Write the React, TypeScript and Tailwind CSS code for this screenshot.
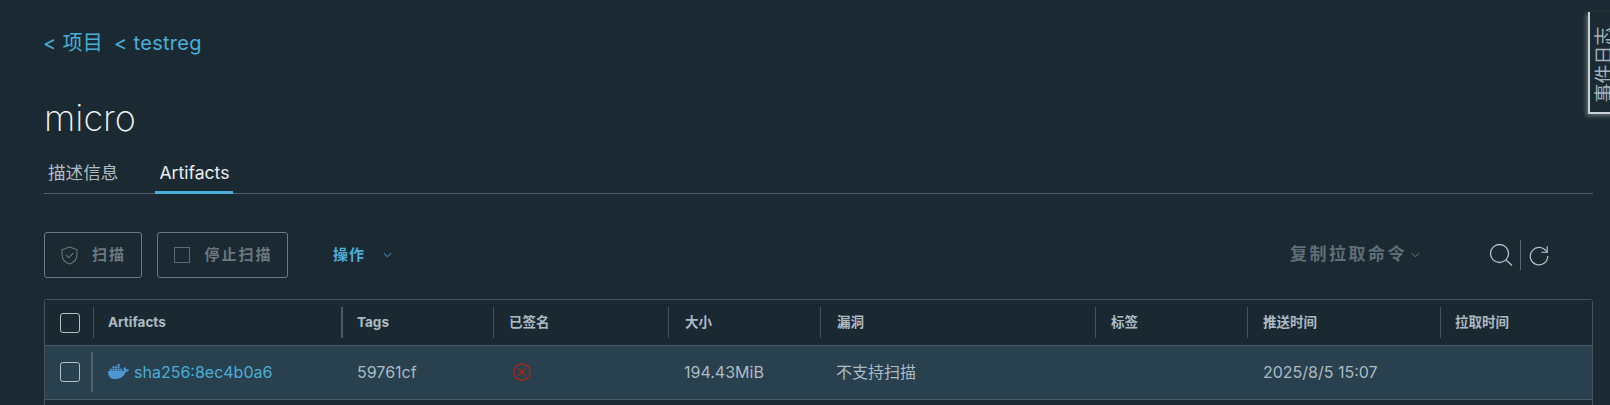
import React from "react";
import { SiDocker } from "react-icons/si";

const font = "font-['Inter','Noto_Sans_CJK_SC',sans-serif]";
const cols = "grid grid-cols-[48px_248px_152px_175px_152px_275px_152px_193px_1fr]";
const headers = [
  { t: "Artifacts", c: "pl-[14px] border-l border-[#45555f]" },
  { t: "Tags", c: "pl-[14px] border-l-2 border-[#4a5a66]" },
  { t: "已签名", c: "pl-[15px] border-l border-[#45555f]" },
  { t: "大小", c: "pl-[16px] border-l border-[#45555f]" },
  { t: "漏洞", c: "pl-[16px] border-l border-[#45555f]" },
  { t: "标签", c: "pl-[15px] border-l border-[#45555f]" },
  { t: "推送时间", c: "pl-[15px] border-l border-[#45555f]" },
  { t: "拉取时间", c: "pl-[14px] border-l border-[#45555f]" },
];

function Check() {
  return <div className="h-5 w-5 rounded-[3px] border border-[#b3bfc7]" />;
}

function Chevron({ className }: { className: string }) {
  return (
    <svg viewBox="0 0 10 6" className={className} fill="none" stroke="currentColor" strokeWidth="1.1">
      <path d="M1 1l4 4 4-4" />
    </svg>
  );
}

export default function App() {
  return (
    <div className={`relative h-[405px] w-[1610px] overflow-hidden bg-[#1b2a32] ${font}`}>
      <div className="flex flex-col pl-11 pr-[17px] pt-[29px]">
        <div className="-ml-px flex h-[28px] items-center gap-[11px] text-[20px] tracking-[0.3px] text-[#49afd9]">
          <span>&lt; 项目</span>
          <span>&lt; testreg</span>
        </div>
        <h1 className="mt-[38px] h-[46px] text-[36px] font-extralight leading-[46px] text-[#f2f4f5]">micro</h1>
        <div className="mt-[16px] flex h-[37px] items-stretch gap-[41px] border-b border-[#4f5f6b] pl-1 text-[17.600px] leading-[32px]">
          <span className="text-[#adbbc4]">描述信息</span>
          <span className="-mb-px -ml-1 border-b-[3px] border-[#49afd9] px-1 text-[#eaedf0]">Artifacts</span>
        </div>

        <div className="mt-[38px] flex h-[46px] items-center">
          <button className="flex h-[46px] w-[98px] items-center justify-center gap-[14px] rounded-[3px] border border-[#6b7a84] pl-[1px] text-[15px] font-bold tracking-[2px] text-[#6b7880]">
            <svg viewBox="0 0 16 18" className="h-[19px] w-[17px]" fill="none" stroke="#6b7880" strokeWidth="1">
              <path d="M8 1l7 2.400v5.400c0 4-3 6.800-7 8.200-4-1.400-7-4.200-7-8.200V3.400z" />
              <path d="M4.500 8.500l2.700 2.700 4.300-4.500" />
            </svg>
            <span>扫描</span>
          </button>
          <button className="ml-[15px] flex h-[46px] w-[131px] items-center justify-center gap-[14px] rounded-[3px] border border-[#6b7a84] pl-[2px] text-[15px] font-bold tracking-[2px] text-[#6b7880]">
            <span className="h-[16px] w-[16px] border border-[#5d6a73]" />
            <span>停止扫描</span>
          </button>
          <span className="ml-[45px] text-[15px] font-bold tracking-[1px] text-[#49afd9]">操作</span>
          <Chevron className="ml-[18px] h-[6px] w-[9px] text-[#49afd9]" />
          <div className="ml-auto flex items-center">
            <span className="text-[17px] font-bold tracking-[2.500px] text-[#5f6e77]">复制拉取命令</span>
            <Chevron className="ml-[4px] h-[6px] w-[9px] text-[#6b7880]" />
            <svg viewBox="0 0 24 24" className="ml-[69px] h-[24px] w-[24px]" fill="none" stroke="#b3c2cb" strokeWidth="1.300">
              <circle cx="10.500" cy="10.500" r="9" />
              <path d="M17 17l6 5.500" />
            </svg>
            <span className="ml-[7px] h-[30px] w-px bg-[#56687a]" />
            <svg viewBox="0 0 24 24" className="ml-[7px] mr-[43px] h-[22px] w-[22px]" fill="none" stroke="#b3c2cb" strokeWidth="1.300">
              <path d="M20.500 9A9.500 9.500 0 1 0 21.500 13" />
              <path d="M21 2.500V9h-6.500" />
            </svg>
          </div>
        </div>

        <div className="mt-[21px] rounded-t-[3px] border border-[#45555f]">
          <div className={`${cols} h-[45px] items-center bg-[#1a2832] text-[13.500px] font-bold text-[#acbac3]`}>
            <div className="flex h-[31px] items-center pl-[15px]"><Check /></div>
            {headers.map((h) => (
              <div key={h.t} className={`flex h-[31px] items-center ${h.c}`}>{h.t}</div>
            ))}
          </div>
          <div className={`${cols} h-[55px] items-center border-y border-[#4a5a66] bg-[#29404e] pb-[2px] text-[16px] text-[#adbbc4]`}>
            <div className="flex h-[40px] items-center justify-between pl-[15px]">
              <Check />
              <span className="h-full w-[2px] bg-[#4f626f]" />
            </div>
            <div className="flex items-center gap-[5px] pl-[15px] text-[#49afd9]">
              <SiDocker className="h-[21px] w-[21px] text-[#4d97d1]" />
              <span>sha256:8ec4b0a6</span>
            </div>
            <div className="pl-[16px]">59761cf</div>
            <div className="pl-[20px]">
              <svg viewBox="0 0 18 18" className="h-[18px] w-[18px]" fill="none" stroke="#b5230f" strokeWidth="1.200">
                <circle cx="9" cy="9" r="8.200" />
                <path d="M5.500 5.500l7 7M12.500 5.500l-7 7" />
              </svg>
            </div>
            <div className="pl-[16px]">194.43MiB</div>
            <div className="pl-[16px]">不支持扫描</div>
            <div />
            <div className="pl-[16px]">2025/8/5 15:07</div>
            <div />
          </div>
          <div className="h-[20px]" />
        </div>
      </div>

      <div className="absolute left-[1588px] top-[12px] flex h-[102px] w-[30px] items-center justify-center border-b-2 border-l-2 border-[#c8d1d7] bg-[#1b2a32] shadow-[-2px_2px_4px_rgba(255,255,255,0.3)]">
        <span className="translate-y-[2px] -rotate-90 whitespace-nowrap text-[19px] leading-none text-[#a3b1ba]">事件日志</span>
      </div>
    </div>
  );
}
